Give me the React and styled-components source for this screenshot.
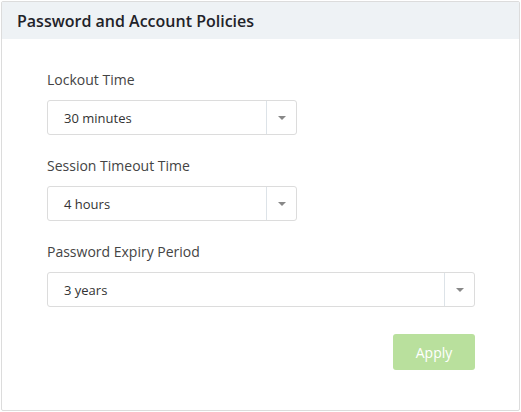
import React from 'react';
import styled, { createGlobalStyle } from 'styled-components';

const GlobalStyle = createGlobalStyle`
  body {
    margin: 0;
    background: #fff;
    font-family: "Open Sans", "Liberation Sans", sans-serif;
  }
`;

const Card = styled.div`
  margin: 1px 0 0 1px;
  width: 519px;
  height: 410px;
  box-sizing: border-box;
  border: 1px solid #dcdcdc;
  border-radius: 2px;
  background: #fff;
`;

const Header = styled.div`
  height: 37px;
  background: #eef2f5;
  display: flex;
  align-items: center;
  padding: 0 15px;
  font-size: 16px;
  font-weight: 600;
  color: #1f2329;
`;

const Body = styled.div`
  padding: 31px 44px 0 45px;
  display: flex;
  flex-direction: column;
`;

const Field = styled.div`
  display: flex;
  flex-direction: column;
  margin-bottom: 21px;
`;

const Label = styled.label`
  font-size: 14px;
  line-height: 20px;
  color: #444;
  margin-bottom: 10px;
`;

const Select = styled.div`
  width: ${(p) => p.$width}px;
  height: 35px;
  box-sizing: border-box;
  border: 1px solid #dcdcdc;
  border-radius: 3px;
  display: flex;
  align-items: stretch;
`;

const Value = styled.div`
  flex: 1;
  display: flex;
  align-items: center;
  padding: 1px 0 0 16px;
  font-size: 13px;
  color: #333;
`;

const Caret = styled.div`
  width: 29px;
  border-left: 1px solid #dde3e8;
  display: flex;
  align-items: center;
  justify-content: center;

  &::after {
    content: '';
    border-left: 4px solid transparent;
    border-right: 4px solid transparent;
    border-top: 4px solid #888;
  }
`;

const Actions = styled.div`
  display: flex;
  justify-content: flex-end;
  margin-top: 6px;
`;

const Button = styled.button`
  width: 82px;
  height: 36px;
  border: none;
  border-radius: 3px;
  background: #b9e09d;
  color: #fff;
  font-family: inherit;
  font-size: 14px;
`;

const fields = [
  { label: 'Lockout Time', value: '30 minutes', width: 250 },
  { label: 'Session Timeout Time', value: '4 hours', width: 250 },
  { label: 'Password Expiry Period', value: '3 years', width: 428 },
];

export default function App() {
  return (
    <>
      <GlobalStyle />
      <Card>
        <Header>Password and Account Policies</Header>
        <Body>
          {fields.map((f) => (
            <Field key={f.label}>
              <Label>{f.label}</Label>
              <Select $width={f.width}>
                <Value>{f.value}</Value>
                <Caret />
              </Select>
            </Field>
          ))}
          <Actions>
            <Button>Apply</Button>
          </Actions>
        </Body>
      </Card>
    </>
  );
}
